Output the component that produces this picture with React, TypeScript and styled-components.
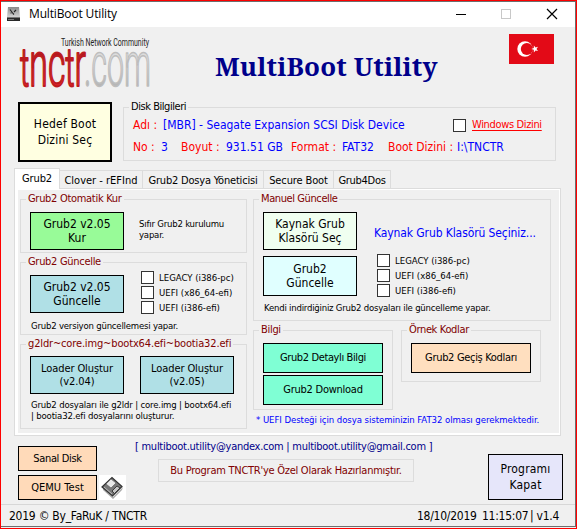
import React from "react";
import styled, { createGlobalStyle } from "styled-components";

const Global = createGlobalStyle`
  * { box-sizing: border-box; }
  body { margin: 0; background: #f0f0f0; overflow: hidden; }
  button { appearance: none; border-radius: 0; padding: 0; margin: 0; }
`;

const tahoma = `"DejaVu Sans Condensed", Tahoma, sans-serif`;

const Frame = styled.div`
  width: 577px;
  height: 529px;
  border: 1px solid #ff0000;
  background: #f0f0f0;
  font: 12px/14px ${tahoma};
  color: #000;
`;

const Win = styled.main`
  height: 526px;
  border: solid #6e6e6e;
  border-width: 1px 1px 1px 0;
  display: flex;
  flex-direction: column;
`;

const TitleBar = styled.header`
  height: 25px;
  flex: none;
  background: #fff;
  display: grid;
  grid-template-columns: 28px 1fr 46px 46px 45px;
  align-items: center;
`;

const TitleIcon = styled.svg`
  margin: -2px 0 0 5px;
`;

const TitleText = styled.span`
  font: 12px/16px "Open Sans", "Segoe UI", sans-serif;
  letter-spacing: -0.15px;
  margin-top: -1px;
`;

const Control = styled.svg`
  margin: -1px 0 0 8px;
`;

const Header = styled.section`
  height: 75px;
  flex: none;
  display: grid;
  grid-template-columns: 197px 311px 45px;
  align-items: start;
`;

const Logo = styled.svg`
  margin: 8px 0 0 17px;
  overflow: visible;
`;

const Title = styled.h1`
  margin: 21px 0 0 17px;
  font: bold 26px/36px "Noto Serif", Cambria, serif;
  letter-spacing: 0.12px;
  color: #00008b;
  white-space: nowrap;
`;

const Flag = styled.svg`
  margin-top: 7px;
`;

const DiskRow = styled.section`
  display: flex;
  height: 60px;
  flex: none;
  margin-left: 17px;
`;

const Button = styled.button<{ $w: number; $h: number; $bg: string; $b?: number; $size?: number; $lh?: number; $ls?: number }>`
  width: ${(p) => p.$w}px;
  height: ${(p) => p.$h}px;
  flex: none;
  background: ${(p) => p.$bg};
  border: ${(p) => p.$b ?? 1}px solid #000;
  font: ${(p) => p.$size ?? 12}px/${(p) => p.$lh ?? 14}px ${tahoma};
  letter-spacing: ${(p) => p.$ls ?? 0}px;
  color: #000;
  white-space: pre-line;
  text-align: center;
`;

const Group = styled.section<{ $h: number; $w?: number }>`
  height: ${(p) => p.$h}px;
  width: ${(p) => (p.$w ? `${p.$w}px` : "auto")};
  flex: none;
  border: 1px solid #dcdcdc;
`;

const Legend = styled.h2<{ $ls?: number; $color?: string }>`
  width: fit-content;
  height: 14px;
  margin: -8px 0 0 5px;
  padding: 0 2px;
  background: #f0f0f0;
  color: ${(p) => p.$color ?? "#800000"};
  font: 11px/14px ${tahoma};
  letter-spacing: ${(p) => p.$ls ?? -0.3}px;
  white-space: nowrap;
`;

const DiskGroup = styled(Group)`
  margin: 5px 0 0 11px;
`;

const DiskName = styled.div`
  display: grid;
  grid-template-columns: 30px 290px 19px auto;
  align-items: center;
  height: 16px;
  margin: 3px 0 0 9px;
  white-space: nowrap;
`;

const DiskInfo = styled.div`
  display: grid;
  grid-template-columns: 28px 20px 45px 65px 51px 46px 69px auto;
  height: 14px;
  margin: 7px 0 0 9px;
  white-space: nowrap;
`;

const Key = styled.span`
  color: #ff0000;
`;

const Value = styled.span`
  color: #0000ff;
`;

const WinLink = styled.a`
  color: #ff0000;
  font: 11px/14px ${tahoma};
  letter-spacing: -0.35px;
  text-decoration: underline;
  text-underline-offset: 2px;
`;

const Box = styled.span`
  width: 13px;
  height: 13px;
  flex: none;
  border: 1px solid #333;
  background: #fff;
`;

const Tabs = styled.nav`
  height: 20px;
  flex: none;
  margin: 6px 0 0 13px;
  display: flex;
  align-items: flex-end;
`;

const Tab = styled.span<{ $w: number; $ls: number; $active?: boolean }>`
  width: ${(p) => p.$w}px;
  height: ${(p) => (p.$active ? 21 : 18)}px;
  margin-bottom: ${(p) => (p.$active ? -1 : 0)}px;
  border: 1px solid #dcdcdc;
  border-bottom: 0;
  border-left-width: ${(p) => (p.$active ? 1 : 0)}px;
  background: ${(p) => (p.$active ? "#fff" : "#f0f0f0")};
  font: 11px/19px ${tahoma};
  letter-spacing: ${(p) => p.$ls}px;
  text-align: center;
  white-space: nowrap;
  z-index: ${(p) => (p.$active ? 1 : 0)};
`;

const Panel = styled.section`
  width: 547px;
  height: 248px;
  flex: none;
  margin-left: 13px;
  border: 1px solid #dcdcdc;
  background: #fff;
  padding: 1px 1px 2px 3px;
`;

const PanelBody = styled.div`
  height: 100%;
  background: #f0f0f0;
  padding: 9px 0 0 2px;
  display: grid;
  grid-template-columns: 227px 298px;
  column-gap: 6px;
`;

const Column = styled.div<{ $gap: number }>`
  display: flex;
  flex-direction: column;
  gap: ${(p) => p.$gap}px;
`;

const Row = styled.div<{ $gap: number; $mt?: number; $ml?: number }>`
  display: flex;
  align-items: flex-start;
  gap: ${(p) => p.$gap}px;
  margin: ${(p) => p.$mt ?? 0}px 0 0 ${(p) => p.$ml ?? 9}px;
`;

const Note = styled.p<{ $mt: number; $ml?: number; $ls?: number; $color?: string }>`
  margin: ${(p) => p.$mt}px 0 0 ${(p) => p.$ml ?? 0}px;
  font: 9.5px/11px ${tahoma};
  letter-spacing: ${(p) => p.$ls ?? -0.2}px;
  color: ${(p) => p.$color ?? "#000"};
  white-space: pre;
`;

const CheckList = styled.div<{ $mt: number }>`
  display: flex;
  flex-direction: column;
  gap: 2px;
  margin-top: ${(p) => p.$mt}px;
`;

const CheckRow = styled.label`
  display: flex;
  align-items: center;
  gap: 5px;
  height: 13px;
  font-size: 9.5px;
  white-space: nowrap;
`;

const Prompt = styled.span`
  margin: 14px 0 0 17px;
  color: #0000ff;
  letter-spacing: -0.1px;
  white-space: nowrap;
`;

const Stack = styled.div<{ $gap: number; $mt?: number; $ml?: number }>`
  display: flex;
  flex-direction: column;
  gap: ${(p) => p.$gap}px;
  margin: ${(p) => p.$mt ?? 0}px 0 0 ${(p) => p.$ml ?? 0}px;
`;

const Footer = styled.section`
  height: 68px;
  flex: none;
  display: grid;
  grid-template-columns: 134px 353px 75px;
  align-items: start;
`;

const Tools = styled.div`
  display: grid;
  grid-template-columns: 79px 27px;
  column-gap: 2px;
  row-gap: 4px;
  margin: 10px 0 0 17px;

  & > :first-child { grid-column: 1 / -1; }
`;

const Contact = styled.div`
  padding-top: 4px;
  font-size: 11px;
  letter-spacing: -0.26px;
  white-space: nowrap;
  color: #00008b;
`;

const Banner = styled.div`
  width: 256px;
  height: 23px;
  margin: 5px 0 0 23px;
  border: 1px solid #dcdcdc;
  color: #800000;
  line-height: 22px;
  text-align: center;
`;

const Exit = styled.div`
  margin-top: 18px;
`;

const Status = styled.footer`
  height: 21px;
  flex: none;
  border-top: 1px solid #d7d7d7;
  display: grid;
  grid-template-columns: 408px 65px 48px 1fr;
  padding-left: 8px;
  line-height: 22px;
  letter-spacing: -0.25px;
  white-space: nowrap;
`;

const Checks = ({ mt }: { mt: number }) => (
  <CheckList $mt={mt}>
    {["LEGACY (i386-pc)", "UEFI (x86_64-efi)", "UEFI (i386-efi)"].map((t) => (
      <CheckRow key={t}>
        <Box />
        {t}
      </CheckRow>
    ))}
  </CheckList>
);

const DiskIcon = () => (
  <svg width="27" height="25" viewBox="0 0 27 25">
    <rect width="27" height="25" fill="#fff" />
    <path d="M4 13L14 22L24 12L23 15L14 24L4 15z" fill="#aaa" />
    <path d="M3 12L13 2.500L23 11.500L13.500 21z" fill="#777" stroke="#333" strokeWidth="1.200" />
    <path d="M7 9L12 4L17 8L12 13z" fill="#e8e8e8" stroke="#555" strokeWidth="0.600" />
    <path d="M13 16L18 11L21 13L15.500 18.500z" fill="#c4c4c4" stroke="#222" strokeWidth="0.800" />
    <path d="M5 12l8 7" stroke="#bbb" strokeWidth="1" />
  </svg>
);

const tabs: [string, number, number][] = [
  ["Clover - rEFInd", 83, 0],
  ["Grub2 Dosya Yöneticisi", 121, -0.2],
  ["Secure Boot", 70, -0.12],
  ["Grub4Dos", 57, -0.3],
];

export default function App() {
  return (
    <Frame>
      <Global />
      <Win>
        <TitleBar>
          <TitleIcon width="16" height="16" viewBox="0 0 16 16">
            <defs>
              <linearGradient id="drive" x1="0" y1="0" x2="0" y2="1">
                <stop offset="0" stopColor="#8a8a8a" />
                <stop offset="1" stopColor="#d2d2d2" />
              </linearGradient>
            </defs>
            <path d="M2 1h11l1 10H1z" fill="url(#drive)" />
            <path d="M1 11h13v4H1z" fill="#292929" />
            <path d="M1 11.5h13M2 13.5h6" stroke="#777" strokeWidth="1" />
            <path d="M4 3.5l3 4M8 6l2-2M7 7.5l1 1M4.500 7h1" stroke="#222" strokeWidth="1.1" />
          </TitleIcon>
          <TitleText>MultiBoot Utility</TitleText>
          <Control width="30" height="12" viewBox="0 0 30 12" shapeRendering="crispEdges">
            <path d="M10 6.500h10" stroke="#000" />
          </Control>
          <Control width="30" height="12" viewBox="0 0 30 12">
            <rect x="9.500" y="1.500" width="9" height="9" fill="none" stroke="#c8c8c8" />
          </Control>
          <Control width="30" height="12" viewBox="0 0 30 12">
            <path d="M9 1l10 10M19 1L9 11" stroke="#000" strokeWidth="1.2" />
          </Control>
        </TitleBar>

        <Header>
          <Logo width="136" height="57" viewBox="0 0 136 57">
            <defs>
              <linearGradient id="red" x1="0" y1="0" x2="0" y2="1">
                <stop offset="0.25" stopColor="#a5151b" />
                <stop offset="0.8" stopColor="#e3262b" />
              </linearGradient>
              <linearGradient id="silver" x1="0" y1="0" x2="0" y2="1">
                <stop offset="0.3" stopColor="#e2e2e2" />
                <stop offset="0.8" stopColor="#b4b4b4" />
              </linearGradient>
            </defs>
            <text x="43" y="11" fontSize="10" fontFamily="Roboto, sans-serif" textLength="88" lengthAdjust="spacingAndGlyphs" fill="#222">
              Turkish Network Community
            </text>
            <g fontFamily="Roboto, sans-serif" fontSize="63" fontWeight="300" strokeLinejoin="round">
              <text x="2" y="51" textLength="66" lengthAdjust="spacingAndGlyphs" fill="url(#red)" stroke="#bd1b20" strokeWidth="2">
                <tspan fontSize="54">t</tspan>nc<tspan fontSize="54">t</tspan>r
              </text>
              <text x="66" y="51" textLength="67" lengthAdjust="spacingAndGlyphs" fill="url(#silver)" stroke="#bdbdbd" strokeWidth="1.6">
                .com
              </text>
            </g>
          </Logo>
          <Title>MultiBoot Utility</Title>
          <Flag width="45" height="30" viewBox="0 0 45 30">
            <rect width="45" height="30" fill="#e30a17" />
            <circle cx="16" cy="15" r="7.700" fill="#fff" />
            <circle cx="17.900" cy="15" r="6.100" fill="#e30a17" />
            <path d="M22.300 15l2.500-.9.100-2.600 1.600 2.100 2.500-.8-1.500 2.200 1.500 2.100-2.500-.7-1.600 2.100-.100-2.700z" fill="#fff" />
          </Flag>
        </Header>

        <DiskRow>
          <Button $w={94} $h={60} $bg="#ffffe1" $b={2} $lh={16} $ls={0.2}>
            {"Hedef Boot\nDizini Seç"}
          </Button>
          <DiskGroup $h={54} $w={433}>
            <Legend $ls={-0.45} $color="#000">Disk Bilgileri</Legend>
            <DiskName>
              <Key>Adı :</Key>
              <Value>[MBR] - Seagate Expansion SCSI Disk Device</Value>
              <Box />
              <WinLink>Windows Dizini</WinLink>
            </DiskName>
            <DiskInfo>
              <Key>No :</Key>
              <Value>3</Value>
              <Key>Boyut :</Key>
              <Value>931.51 GB</Value>
              <Key>Format :</Key>
              <Value>FAT32</Value>
              <Key>Boot Dizini :</Key>
              <Value>I:\TNCTR</Value>
            </DiskInfo>
          </DiskGroup>
        </DiskRow>

        <Tabs>
          <Tab $w={46} $ls={-0.1} $active>Grub2</Tab>
          {tabs.map(([name, w, ls]) => (
            <Tab key={name} $w={w} $ls={ls}>{name}</Tab>
          ))}
        </Tabs>

        <Panel>
          <PanelBody>
            <Column $gap={9}>
              <Group $h={54}>
                <Legend>Grub2 Otomatik Kur</Legend>
                <Row $gap={15} $mt={6}>
                  <Button $w={94} $h={38} $bg="#98fb98">{"Grub2 v2.05\nKur"}</Button>
                  <Note $mt={6}>{"Sıfır Grub2 kurulumu\nyapar."}</Note>
                </Row>
              </Group>
              <Group $h={73}>
                <Legend>Grub2 Güncelle</Legend>
                <Row $gap={17} $mt={2}>
                  <Stack $gap={0} $mt={4}>
                    <Button $w={94} $h={38} $bg="#b0e0e6">{"Grub2 v2.05\nGüncelle"}</Button>
                  </Stack>
                  <Checks mt={0} />
                </Row>
                <Note $mt={6} $ml={10}>Grub2 versiyon güncellemesi yapar.</Note>
              </Group>
              <Group $h={85}>
                <Legend $ls={-0.15}>g2ldr~core.img~bootx64.efi~bootia32.efi</Legend>
                <Row $gap={16} $mt={5}>
                  <Button $w={94} $h={38} $bg="#b0e0e6" $size={11} $lh={13} $ls={-0.1}>{"Loader Oluştur\n(v2.04)"}</Button>
                  <Button $w={94} $h={38} $bg="#b0e0e6" $size={11} $lh={13} $ls={-0.1}>{"Loader Oluştur\n(v2.05)"}</Button>
                </Row>
                <Note $mt={5} $ml={10} $ls={-0.16}>
                  {"Grub2 dosyaları ile g2ldr | core.img | bootx64.efi\n| bootia32.efi dosyalarını oluşturur."}
                </Note>
              </Group>
            </Column>

            <Column $gap={9}>
              <Group $h={122}>
                <Legend $ls={-0.4}>Manuel Güncelle</Legend>
                <Row $gap={0} $mt={6}>
                  <Button $w={94} $h={38} $bg="#f0fff0">{"Kaynak Grub\nKlasörü Seç"}</Button>
                  <Prompt>Kaynak Grub Klasörü Seçiniz...</Prompt>
                </Row>
                <Row $gap={20} $mt={6}>
                  <Button $w={94} $h={40} $bg="#e0ffff">{"Grub2\nGüncelle"}</Button>
                  <Checks mt={-2} />
                </Row>
                <Note $mt={5} $ml={10} $ls={-0.21}>Kendi indirdiğiniz Grub2 dosyaları ile güncelleme yapar.</Note>
              </Group>
              <div>
                <Row $gap={8} $ml={0}>
                  <Group $h={80} $w={140}>
                    <Legend>Bilgi</Legend>
                    <Stack $gap={2} $mt={6} $ml={9}>
                      <Button $w={120} $h={30} $bg="#7fffd4" $size={11} $ls={-0.38}>Grub2 Detaylı Bilgi</Button>
                      <Button $w={120} $h={30} $bg="#7fffd4" $size={11} $ls={-0.25}>Grub2 Download</Button>
                    </Stack>
                  </Group>
                  <Group $h={52} $w={140}>
                    <Legend $ls={-0.35}>Örnek Kodlar</Legend>
                    <Stack $gap={0} $mt={6} $ml={9}>
                      <Button $w={120} $h={30} $bg="#ffdfbf" $size={11} $ls={-0.32}>Grub2 Geçiş Kodları</Button>
                    </Stack>
                  </Group>
                </Row>
                <Note $mt={4} $ml={3} $ls={-0.05} $color="#0000ff">
                  * UEFI Desteği için dosya sisteminizin FAT32 olması gerekmektedir.
                </Note>
              </div>
            </Column>
          </PanelBody>
        </Panel>

        <Footer>
          <Tools>
            <Button $w={79} $h={25} $bg="#ffdab9" $size={11} $ls={-0.35}>Sanal Disk</Button>
            <Button $w={79} $h={25} $bg="#ffdab9" $size={11} $ls={0.05}>QEMU Test</Button>
            <DiskIcon />
          </Tools>
          <Contact>
            [ multiboot.utility@yandex.com | multiboot.utility@gmail.com ]
            <Banner>Bu Program TNCTR'ye Özel Olarak Hazırlanmıştır.</Banner>
          </Contact>
          <Exit>
            <Button $w={75} $h={46} $bg="#e6e6fa" $lh={16} $ls={0.2}>{"Programı\nKapat"}</Button>
          </Exit>
        </Footer>

        <Status>
          <span>2019 © By_FaRuK / TNCTR</span>
          <span>18/10/2019</span>
          <span>11:15:07</span>
          <span>| v1.4</span>
        </Status>
      </Win>
    </Frame>
  );
}
